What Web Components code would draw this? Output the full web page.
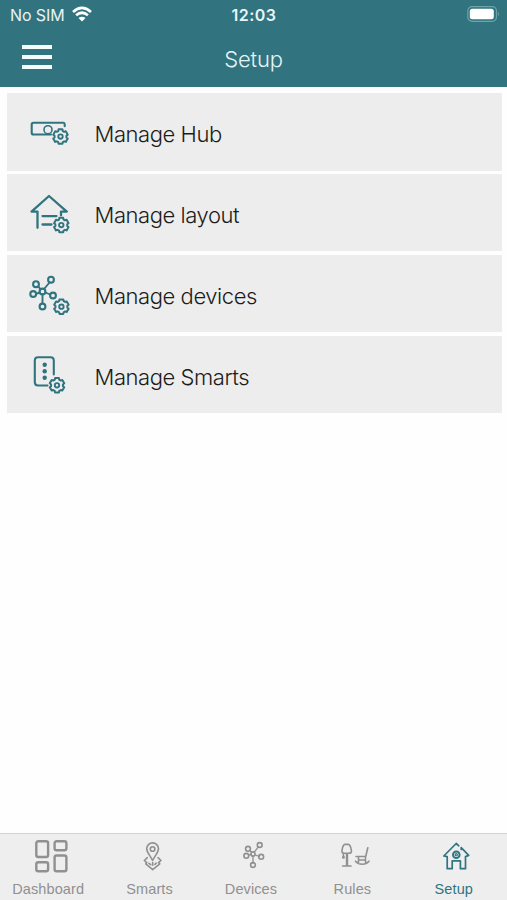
<!DOCTYPE html>
<html lang="en">
<head>
<meta charset="utf-8">
<title>Setup</title>
<style>
html, body {
    margin: 0;
    height: 100%;
    background: #fefefe;
}
</style>
</head>
<body>
<setup-page></setup-page>
<script>
// outline of a six-toothed cog centred on cx, cy
function cog(cx, cy) {
  const points = [];
  for (let i = 0; i < 6; i++) {
    [[-22, 6], [-15, 7.5], [15, 7.5], [22, 6]].forEach(([offset, r]) => {
      const a = (i * 60 - 90 + offset) * Math.PI / 180;
      points.push(`${(cx + r * Math.cos(a)).toFixed(2)} ${(cy + r * Math.sin(a)).toFixed(2)}`);
    });
  }
  return `<path stroke-width="2" d="M${points.join('L')}Z"/><circle cx="${cx}" cy="${cy}" r="2.2" stroke-width="1.9"/>`;
}

const icons = {
  hub: `<g transform="translate(0 8.2)">
    <path d="M31 24.3H13.5Q11.7 24.3 11.7 22.5V14.3Q11.7 12.5 13.5 12.5H43.5Q44.7 12.5 44.7 14V16"/>
    <circle cx="28" cy="19.5" r="4" stroke-width="1.6"/>${cog(40.5, 26.4)}</g>`,
  layout: `<g transform="translate(0 2.3)">
    <path stroke-width="2.3" d="M17.5 42.5V26.3H11.5L29 10.7L46.8 26.3H41V30M22.5 30.8H36.5M22.5 39.2H31.5"/>${cog(41.3, 39.8)}</g>`,
  devices: `<g transform="translate(0 1.5)">
    <path stroke-width="1.9" d="M20.5 24L18.5 21M20 27L17 28M24.5 23L29.5 17M25.5 27L30 29M22.5 29V37.5"/>
    <circle cx="22.5" cy="26" r="2.9"/><circle cx="16" cy="18.7" r="2.9"/><circle cx="13.2" cy="28.5" r="2.9"/>
    <circle cx="31" cy="14.2" r="2.9"/><circle cx="33" cy="30" r="2.9"/><circle cx="22.5" cy="41" r="2.9"/>${cog(41.4, 41.2)}</g>`,
  smarts: `<g transform="translate(0 .5)">
    <path d="M27.5 41H18Q14.8 41 14.8 37.8V16Q14.8 12.8 18 12.8H30.5Q33.8 12.8 33.8 16V30"/>
    <g fill="currentColor" stroke="none"><circle cx="24.7" cy="20.2" r="2.2"/><circle cx="24.7" cy="26.7" r="2.2"/><circle cx="24.7" cy="33.2" r="2.2"/></g>${cog(37, 40.8)}</g>`,
};

// tab glyphs are drawn on a 40x36 box
const tabIcons = {
  dashboard: `<g stroke-width="2.4"><rect x="5.3" y="3.2" width="11.8" height="15.8" rx="2"/>
    <rect x="5.3" y="24.3" width="11.8" height="9" rx="2"/><rect x="23.6" y="3.2" width="11.8" height="9" rx="2"/>
    <rect x="23.6" y="17.5" width="11.8" height="15.8" rx="2"/></g>`,
  smarts: `<path d="M20.6 22.5C18 17 14.7 14.5 14.7 10.8A5.9 5.9 0 0 1 26.5 10.8C26.5 14.5 23.2 17 20.6 22.5Z"/>
    <circle cx="20.6" cy="11" r="2.3"/>
    <path d="M15.3 19.7L12.3 22.5L14.8 24.7L13.7 25.8L20.7 31.7L27.8 25.8L26.4 24.7L29 22.5L26 19.7M17 25.3L18.7 26.7M20.7 24.5V27.3M24.2 25.2L22.8 26.5"/>`,
  devices: `<path stroke-width="1.3" d="M18.7 14.3L16.8 12.5M18 16.5L16 17.2M21.3 14.2L25.3 8.8M22.2 17L26.2 18.3M20 18V25"/>
    <circle cx="20" cy="16" r="2.1"/><circle cx="15" cy="10.8" r="2.4"/><circle cx="13.3" cy="17.8" r="2.4"/>
    <circle cx="26.7" cy="7" r="2.4"/><circle cx="28.2" cy="18.8" r="2.4"/><circle cx="20" cy="27" r="2.4"/>`,
  rules: `<path d="M9.3 15.3Q6.6 15.3 7 12.6Q7.8 6.4 10.1 6.4H13.2Q15.5 6.4 16.4 12.6Q16.8 15.3 14 15.3ZM7.6 28H16M8.4 16V19.5"/>
    <path stroke-width="2.4" stroke-linecap="butt" d="M12 15.5V27.8"/><circle cx="8.4" cy="19.3" r=".7"/>
    <path d="M32.8 9.7L30.7 18.5H22.7M22 18.5H21M23.5 18.5V24.5M30.5 18.5V24.5M23.3 22H30.2M20.5 23.2Q23 26.2 27.3 26.2Q31.5 26.2 34 23.2"/>`,
  setup: `<path stroke-width="1.7" d="M11.2 18.6L7.8 18L20.2 5.5L22.8 7.8M25.2 11.5V9.7L32.7 17.4L29.5 18.6V30.7H24.4V22.9H16.2V30.7H11.2V18.6"/>
    <circle cx="20.3" cy="16.7" r="3.3" stroke-width="2"/><circle cx="20.3" cy="16.7" r="1.1" stroke-width="1.1"/>`,
};

class StatusBar extends HTMLElement {
  constructor() {
    super();
    this.attachShadow({ mode: 'open' });
    this.shadowRoot.innerHTML = `
<style>
:host {
    display: grid;
    grid-template-columns: 1fr auto 1fr;
    align-items: center;
    height: 30px;
    padding: 0 7px 0 10px;
    font: 16px/30px Inter, "Liberation Sans", sans-serif;
    color: #e9f4f5;
}
.carrier { display: flex; align-items: center; gap: 7px; letter-spacing: -0.1px; }
.time { font-weight: 600; letter-spacing: 0.5px; padding-right: 2px; }
.battery { justify-self: end; }
svg { display: block; }
.carrier svg { margin-top: -2px; }
.battery { margin-top: -2px; }
</style>
<div class="carrier"><slot name="carrier"></slot>
<svg width="20" height="16" viewBox="0 0 20 16" fill="none" stroke="#fff" stroke-width="2.7">
<path d="M1 5.9Q10 -2 19 5.9M4.1 9.3Q10 4.2 15.9 9.3"/><path fill="#fff" stroke="none" d="M6.5 12.1Q10 9.3 13.5 12.1L10 15.5Z"/>
</svg></div>
<div class="time"><slot name="time"></slot></div>
<svg class="battery" width="33" height="18" viewBox="0 0 33 18">
<rect x=".8" y="1.6" width="28.7" height="14.7" rx="4.3" fill="none" stroke="#6fa2a9" stroke-width="1.2"/>
<rect x="2.8" y="3.7" width="24" height="10.6" rx="2.5" fill="#fff"/><path d="M31 7Q33 9 31 11Z" fill="#6fa2a9"/>
</svg>`;
  }
}
customElements.define('status-bar', StatusBar);

class NavBar extends HTMLElement {
  constructor() {
    super();
    this.attachShadow({ mode: 'open' });
    this.shadowRoot.innerHTML = `
<style>
:host {
    display: grid;
    grid-template-columns: 1fr auto 1fr;
    align-items: center;
    height: 57px;
    padding: 0 22px;
    color: #e4f5f7;
}
.burger { display: grid; gap: 6px; width: 30px; margin-top: -3px; }
.burger i { height: 3.7px; background: #f5fcfc; }
.title { font: 300 22px/30px Inter, "Liberation Sans", sans-serif; letter-spacing: -0.2px; }
</style>
<div class="burger"><i></i><i></i><i></i></div>
<div class="title"><slot></slot></div>`;
  }
}
customElements.define('nav-bar', NavBar);

class MenuRow extends HTMLElement {
  constructor() {
    super();
    this.attachShadow({ mode: 'open' });
  }

  connectedCallback() {
    this.shadowRoot.innerHTML = `
<style>
:host {
    display: flex;
    align-items: center;
    height: 77.6px;
    padding-left: 13px;
    gap: 15px;
    background: #ededed;
    font: 300 22px/30px Inter, "Liberation Sans", sans-serif;
    letter-spacing: -0.43px;
    color: #1c1c1c;
}
svg { color: #30747f; flex: none; }
.label { padding-top: 5px; }
</style>
<svg width="60" height="60" viewBox="0 0 60 60" fill="none" stroke="currentColor" stroke-width="2.1" stroke-linecap="round" stroke-linejoin="round">${icons[this.getAttribute('icon')]}</svg>
<div class="label"><slot></slot></div>`;
  }
}
customElements.define('menu-row', MenuRow);

class TabItem extends HTMLElement {
  constructor() {
    super();
    this.attachShadow({ mode: 'open' });
  }

  connectedCallback() {
    this.shadowRoot.innerHTML = `
<style>
:host {
    display: flex;
    flex-direction: column;
    align-items: center;
    padding-top: 4px;
    font: 14.5px/18px "Liberation Sans", Arial, sans-serif;
    letter-spacing: 0.1px;
    color: #909090;
}
:host([active]) { color: #30747f; }
svg { display: block; }
.label { padding: 6px 5px 0 0; }
</style>
<svg width="40" height="36" viewBox="0 0 40 36" fill="none" stroke="currentColor" stroke-width="1.6" stroke-linecap="round" stroke-linejoin="round">${tabIcons[this.getAttribute('icon')]}</svg>
<div class="label"><slot></slot></div>`;
  }
}
customElements.define('tab-item', TabItem);

class SetupPage extends HTMLElement {
  constructor() {
    super();
    this.attachShadow({ mode: 'open' });
    this.shadowRoot.innerHTML = `
<style>
:host { display: flex; flex-direction: column; height: 100%; overflow: hidden; }
header { background: #31737e; }
main {
    flex: 1;
    display: flex;
    flex-direction: column;
    gap: 3.3px;
    padding: 6px 5.5px 0 6.5px;
}
footer {
    display: grid;
    grid-template-columns: repeat(5, 1fr);
    box-sizing: border-box;
    height: 67px;
    background: #eee;
    border-top: 1.5px solid #d2d2d2;
}
</style>
<header>
<status-bar><span slot="carrier">No SIM</span><span slot="time">12:03</span></status-bar>
<nav-bar>Setup</nav-bar>
</header>
<main>
<menu-row icon="hub">Manage Hub</menu-row>
<menu-row icon="layout">Manage layout</menu-row>
<menu-row icon="devices">Manage devices</menu-row>
<menu-row icon="smarts">Manage Smarts</menu-row>
</main>
<footer>
<tab-item icon="dashboard">Dashboard</tab-item>
<tab-item icon="smarts">Smarts</tab-item>
<tab-item icon="devices">Devices</tab-item>
<tab-item icon="rules">Rules</tab-item>
<tab-item icon="setup" active>Setup</tab-item>
</footer>`;
  }
}
customElements.define('setup-page', SetupPage);
</script>
</body>
</html>
